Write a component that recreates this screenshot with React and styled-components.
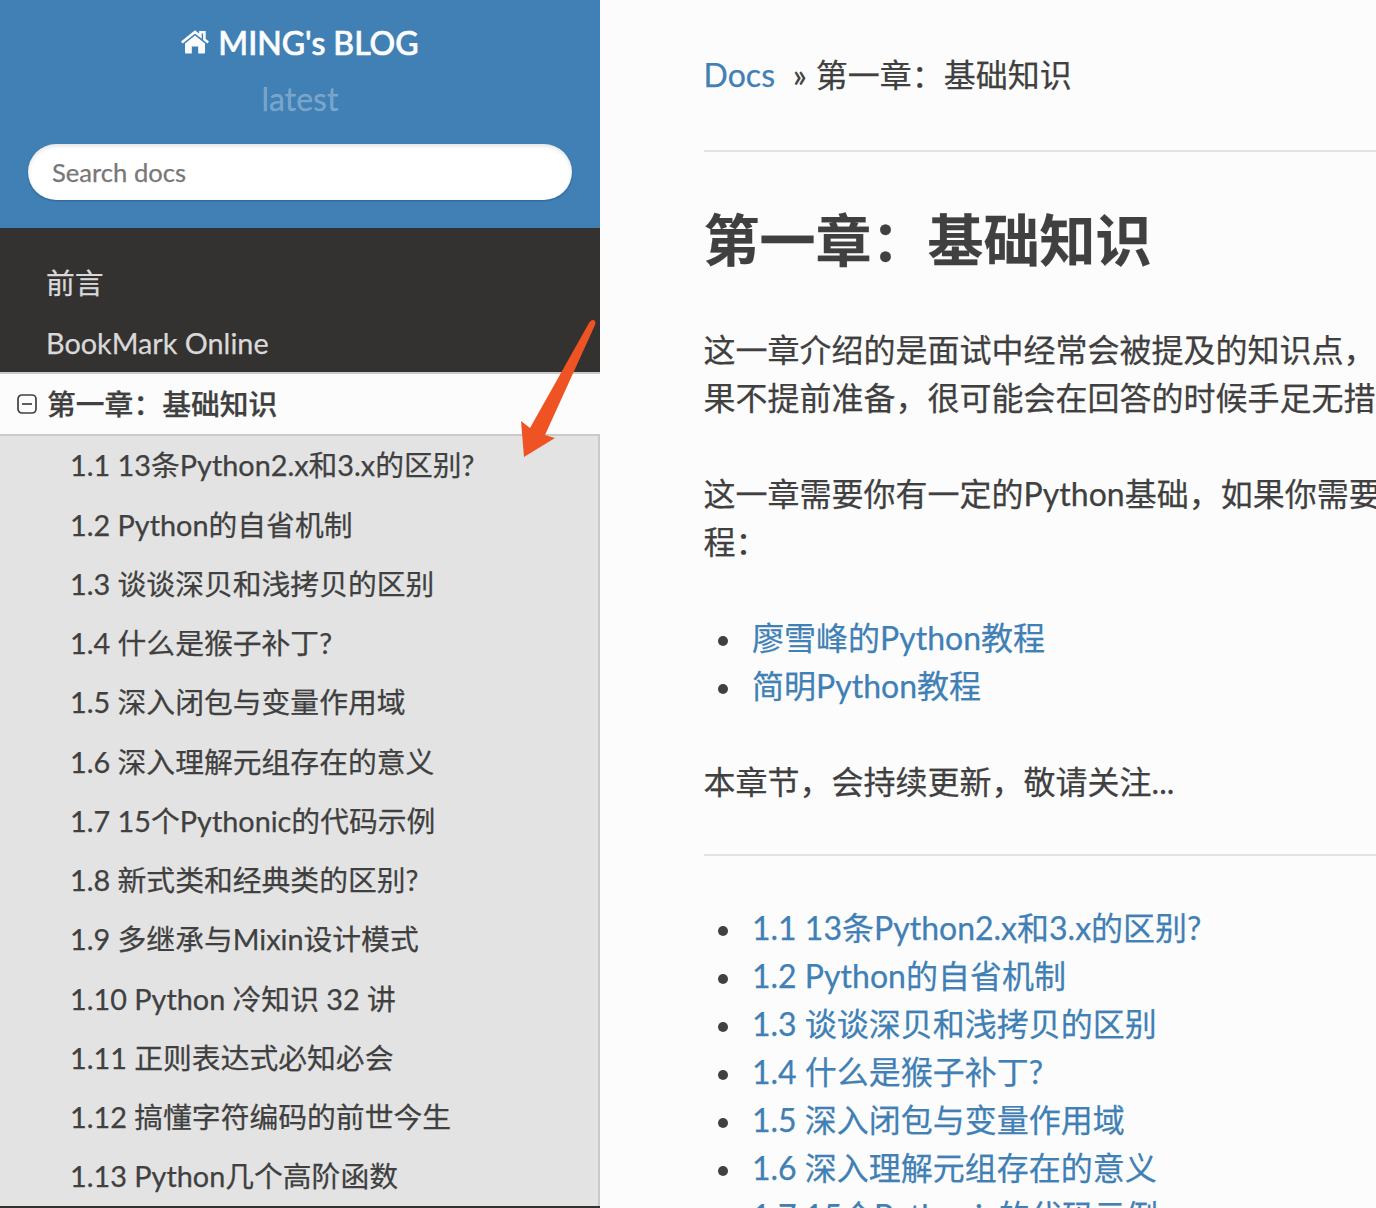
import React from "react";
import styled, { createGlobalStyle } from "styled-components";

const chapters = [
  "1.1 13条Python2.x和3.x的区别?",
  "1.2 Python的自省机制",
  "1.3 谈谈深贝和浅拷贝的区别",
  "1.4 什么是猴子补丁?",
  "1.5 深入闭包与变量作用域",
  "1.6 深入理解元组存在的意义",
  "1.7 15个Pythonic的代码示例",
  "1.8 新式类和经典类的区别?",
  "1.9 多继承与Mixin设计模式",
  "1.10 Python 冷知识 32 讲",
  "1.11 正则表达式必知必会",
  "1.12 搞懂字符编码的前世今生",
  "1.13 Python几个高阶函数",
];

const GlobalStyle = createGlobalStyle`
  html, body {
    margin: 0;
    padding: 0;
    height: 100%;
    overflow: hidden;
    background: #fcfcfc;
  }

  * {
    box-sizing: border-box;
  }
`;

const HomeIcon = () => (
  <svg width="28" height="24" viewBox="0 0 28 24" aria-hidden="true">
    <path
      d="M4 13.5 L14 5.6 L24 13.5 V22.5 a1 1 0 0 1 -1 1 H17.2 V16.4 H10.8 V23.5 H5 a1 1 0 0 1 -1 -1 Z"
      fill="currentColor"
    />
    <path
      d="M0.8 12.4 L14 2 L19.4 6.2 V2.2 H23.4 V9.4 L27.2 12.4"
      fill="none"
      stroke="currentColor"
      strokeWidth="2.6"
    />
  </svg>
);

const MinusSquare = () => (
  <svg width="20" height="20" viewBox="0 0 20 20" fill="none" stroke="currentColor" strokeWidth="1.7" aria-hidden="true">
    <rect x="1" y="1" width="18" height="18" rx="4" />
    <path d="M5 10 H15" />
  </svg>
);

const App = () => {
  return (
    <Page>
      <GlobalStyle />
      <Sidebar>
        <SideHeader>
          <BlogTitle>
            <HomeIcon />
            MING's BLOG
          </BlogTitle>
          <Version>latest</Version>
          <SearchInput type="text" placeholder="Search docs" />
        </SideHeader>
        <Menu>
          <TopItem>前言</TopItem>
          <TopItem>BookMark Online</TopItem>
          <CurrentItem>
            <MinusSquare />
            第一章：基础知识
          </CurrentItem>
          <SubMenu>
            {chapters.map((item) => (
              <SubItem key={item}>{item}</SubItem>
            ))}
          </SubMenu>
        </Menu>
        <Arrow viewBox="0 0 84 144" aria-hidden="true">
          <path
            d="M73 7 Q76 2 79 5 Q80 7 79 9 L29 119 L39 122 L8 141 L5 105 L14 112 Z"
            fill="#ef5323"
          />
        </Arrow>
      </Sidebar>

      <Main>
        <Breadcrumbs>
          <Link>Docs</Link>
          <Crumb>»</Crumb>
          第一章：基础知识
        </Breadcrumbs>
        <Rule />
        <Heading>第一章：基础知识</Heading>
        <Para>
          这一章介绍的是面试中经常会被提及的知识点，如
          <br />
          果不提前准备，很可能会在回答的时候手足无措。
        </Para>
        <Para>
          这一章需要你有一定的Python基础，如果你需要学习
          <br />
          程：
        </Para>
        <BulletList>
          <li><Link>廖雪峰的Python教程</Link></li>
          <li><Link>简明Python教程</Link></li>
        </BulletList>
        <Para>本章节，会持续更新，敬请关注...</Para>
        <Rule />
        <BulletList>
          {chapters.slice(0, 7).map((item) => (
            <li key={item}><Link>{item}</Link></li>
          ))}
        </BulletList>
      </Main>
    </Page>
  );
};

/* Styled Components */
const Page = styled.div`
  display: grid;
  grid-template-columns: 600px 1fr;
  width: 1376px;
  height: 1208px;
  overflow: hidden;
  font-family: "Lato", "Noto Sans CJK SC", sans-serif;
  color: #404040;
  -webkit-text-stroke: 0.25px;
`;

const Sidebar = styled.aside`
  position: relative;
  display: flex;
  flex-direction: column;
  background: #343131;
`;

const SideHeader = styled.div`
  display: flex;
  flex-direction: column;
  align-items: center;
  height: 228px;
  padding: 19px 28px 0;
  background: #4080b5;
`;

const BlogTitle = styled.div`
  display: flex;
  align-items: center;
  gap: 9px;
  height: 46px;
  font-size: 32px;
  font-weight: 500;
  color: #fcfcfc;
  -webkit-text-stroke: 0.7px;
`;

const Version = styled.div`
  margin-top: 11px;
  height: 46px;
  line-height: 46px;
  font-size: 32px;
  color: rgba(255, 255, 255, 0.3);
`;

const SearchInput = styled.input`
  width: 100%;
  height: 56px;
  margin-top: 22px;
  padding: 0 24px;
  border: 0;
  border-radius: 28px;
  outline: none;
  background: #fff;
  box-shadow: inset 0 2px 4px rgba(0, 0, 0, 0.12), 0 1px 2px rgba(30, 80, 130, 0.6);
  font-family: inherit;
  font-size: 25.6px;

  &::placeholder {
    color: #777;
    opacity: 1;
  }
`;

const Menu = styled.nav`
  display: flex;
  flex-direction: column;
  padding-top: 25px;
  font-size: 28.8px;
  line-height: 36px;
`;

const TopItem = styled.div`
  height: 59.6px;
  padding: 12px 46px;
  color: #d9d9d9;
`;

const CurrentItem = styled.div`
  display: flex;
  align-items: center;
  gap: 10px;
  height: 63.8px;
  padding: 0 17px;
  border-top: 2px solid #c9c9c9;
  border-bottom: 2px solid #c9c9c9;
  background: #fcfcfc;
  font-weight: 500;
  color: #404040;
`;

const SubMenu = styled.div`
  display: flex;
  flex-direction: column;
  border-right: 2px solid #c9c9c9;
  background: #e3e3e3;
`;

const SubItem = styled.div`
  height: 59.25px;
  padding: 11.4px 70px;
  color: #404040;
  white-space: nowrap;
`;

const Arrow = styled.svg`
  position: absolute;
  left: 516px;
  top: 316px;
  width: 84px;
  height: 144px;
`;

const Main = styled.main`
  min-width: 0;
  padding: 51px 0 0 103.6px;
  background: #fcfcfc;
  font-size: 32px;
  line-height: 48px;
  white-space: nowrap;
`;

const Breadcrumbs = styled.div`
  height: 51px;
`;

const Crumb = styled.span`
  margin: 0 9px 0 18px;
  font-size: 32px;
`;

const Link = styled.span`
  color: #4080b5;
`;

const Rule = styled.hr`
  height: 2px;
  margin: 48px 0 48px 0.4px;
  border: 0;
  background: #e1e4e5;
`;

const Heading = styled.h1`
  margin: 0 0 46px;
  font-size: 56px;
  line-height: 80px;
  font-weight: 700;
`;

const Para = styled.p`
  margin: 0 0 48px;
`;

const BulletList = styled.ul`
  margin: 0 0 48px;
  padding: 0 0 0 48.4px;
  list-style: none;

  li {
    display: flex;
    align-items: center;
  }

  li::before {
    content: "";
    flex: none;
    width: 10px;
    height: 10px;
    margin: 5px 24px 0 -34px;
    border-radius: 50%;
    background: #404040;
  }
`;

export default App;
